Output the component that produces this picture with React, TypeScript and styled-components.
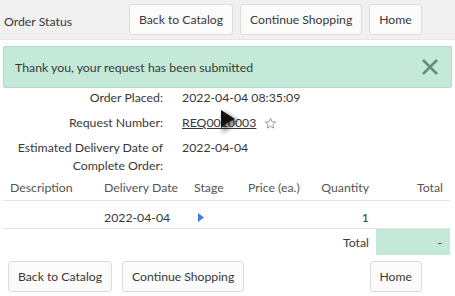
import styled, { createGlobalStyle } from "styled-components";

const GlobalStyle = createGlobalStyle`
    html, body {
        margin: 0;
        padding: 0;
        background: #fff;
    }
    body {
        font-family: "Lato", "Liberation Sans", sans-serif;
        font-size: 12.3px;
        color: #383838;
    }
`;

const Page = styled.div`
    width: 455px;
    height: 296px;
    overflow: hidden;
`;

const Header = styled.div`
    height: 40px;
    display: flex;
    align-items: center;
    padding-left: 4px;
    background: #f0f0f0;
    border-bottom: 1px solid #e6e6e6;
    box-sizing: border-box;
`;

const Title = styled.div`
    width: 125px;
    padding-top: 4px;
`;

const BtnGroup = styled.div`
    display: flex;
    gap: 7px;
`;

const Button = styled.button`
    height: 31px;
    padding: 0 9px;
    background: #fbfbfb;
    border: 1px solid #dcdcdc;
    border-radius: 3px;
    font-family: inherit;
    font-size: 12.2px;
    color: #383838;
`;

const Alert = styled.div`
    margin: 6px 3px 0;
    height: 42px;
    box-sizing: border-box;
    display: flex;
    align-items: center;
    justify-content: space-between;
    padding: 0 12px 0 11px;
    background: #c4e9d9;
    border: 1px solid #aadcc6;
    border-radius: 2px;
`;

const Details = styled.div`
    display: grid;
    grid-template-columns: 163px 1fr;
    column-gap: 19px;
    row-gap: 7px;
    padding-top: 1px;
    line-height: 18px;
`;

const Label = styled.div`
    text-align: right;
    padding-left: 12px;
`;

const Value = styled.div<{ $top?: boolean }>`
    display: flex;
    align-items: ${(p) => (p.$top ? "flex-start" : "center")};
    gap: 8px;
`;

const ReqLink = styled.span`
    position: relative;
    text-decoration: underline;
`;

const Cursor = styled.svg`
    position: absolute;
    left: 36px;
    top: -8px;
`;

const Table = styled.div`
    margin: 0 5px 0 3px;
`;

const Row = styled.div<{ $border?: boolean; $h: number; $pad?: number }>`
    display: grid;
    grid-template-columns: 94px 90px 54px 72px 57px 80px;
    align-items: center;
    height: ${(p) => p.$h}px;
    padding-top: ${(p) => p.$pad ?? 0}px;
    border-bottom: ${(p) => (p.$border ? "1px solid #e3e3e3" : "none")};
    box-sizing: border-box;
`;

const Cell = styled.div<{ $right?: boolean; $muted?: boolean }>`
    text-align: ${(p) => (p.$right ? "right" : "left")};
    color: ${(p) => (p.$muted ? "#555" : "#383838")};
    padding-left: ${(p) => (p.$right ? "0" : "7px")};
    padding-right: ${(p) => (p.$right ? "1px" : "0")};
`;

const TotalHead = styled(Cell)`
    padding-right: 7px;
`;

const TotalCell = styled.div`
    height: 26px;
    background: #c4e9d9;
    display: flex;
    align-items: center;
    justify-content: flex-end;
    padding-right: 8px;
    margin-left: 6px;
    box-sizing: border-box;
`;

const Footer = styled.div`
    display: flex;
    gap: 10px;
    padding: 6px 0 0 8px;
`;

const Spacer = styled.div`
    flex: 1;
`;

const FooterHome = styled(Button)`
    margin-right: 33px;
`;

export default function App() {
    return (
        <Page>
            <GlobalStyle />
            <Header>
                <Title>Order Status</Title>
                <BtnGroup>
                    <Button>Back to Catalog</Button>
                    <Button>Continue Shopping</Button>
                    <Button>Home</Button>
                </BtnGroup>
            </Header>
            <Alert>
                <span>Thank you, your request has been submitted</span>
                <svg width="18" height="18" viewBox="0 0 18 18">
                    <path d="M2 2 L16 16 M16 2 L2 16" stroke="#5f8f79" strokeWidth="2.6" />
                </svg>
            </Alert>
            <Details>
                <Label>Order Placed:</Label>
                <Value>2022-04-04 08:35:09</Value>
                <Label>Request Number:</Label>
                <Value>
                    <ReqLink>
                        REQ0010003
                        <Cursor width="26" height="30" viewBox="0 0 26 30">
                            <defs>
                                <filter id="blur" x="-50%" y="-50%" width="200%" height="200%">
                                    <feGaussianBlur stdDeviation="2.5" />
                                </filter>
                            </defs>
                            <path d="M5 6 L5 27 L11 21 L21 16 Z" fill="#000" opacity="0.55" filter="url(#blur)" />
                            <path d="M3 4 L3 22 L9 17 L17 13 Z" fill="#111" />
                        </Cursor>
                    </ReqLink>
                    <svg width="13" height="13" viewBox="0 0 24 24">
                        <path
                            d="M12 2.5l2.9 6.2 6.6.7-5 4.5 1.4 6.6L12 17.1l-5.9 3.4 1.4-6.6-5-4.5 6.6-.7z"
                            fill="none"
                            stroke="#8a8a8a"
                            strokeWidth="1.6"
                            strokeLinejoin="round"
                        />
                    </svg>
                </Value>
                <Label>Estimated Delivery Date of Complete Order:</Label>
                <Value $top>2022-04-04</Value>
            </Details>
            <Table>
                <Row $border $h={26}>
                    <Cell $muted>Description</Cell>
                    <Cell $muted>Delivery Date</Cell>
                    <Cell $muted>Stage</Cell>
                    <Cell $muted>Price (ea.)</Cell>
                    <Cell $muted $right>Quantity</Cell>
                    <TotalHead $muted $right>Total</TotalHead>
                </Row>
                <Row $border $h={28} $pad={6}>
                    <Cell />
                    <Cell>2022-04-04</Cell>
                    <Cell>
                        <svg width="6" height="9" viewBox="0 0 6 9" style={{ marginLeft: 4 }}>
                            <path d="M0 0 L6 4.5 L0 9 Z" fill="#3d7ee0" />
                        </svg>
                    </Cell>
                    <Cell />
                    <Cell $right>1</Cell>
                    <Cell />
                </Row>
                <Row $h={26}>
                    <Cell />
                    <Cell />
                    <Cell />
                    <Cell />
                    <Cell $right>Total</Cell>
                    <TotalCell>-</TotalCell>
                </Row>
            </Table>
            <Footer>
                <Button>Back to Catalog</Button>
                <Button>Continue Shopping</Button>
                <Spacer />
                <FooterHome>Home</FooterHome>
            </Footer>
        </Page>
    );
}
